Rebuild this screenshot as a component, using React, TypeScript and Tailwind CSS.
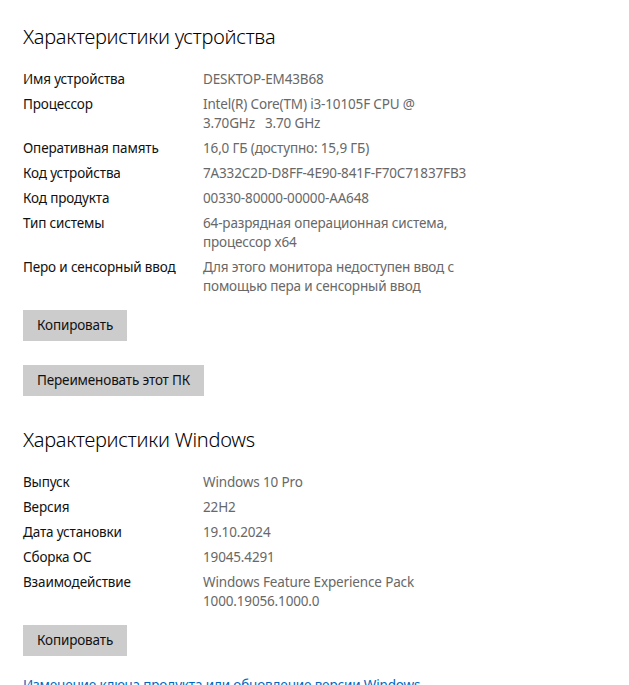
// Окно «О системе» — характеристики устройства и Windows.

const DEVICE: [string, string[]][] = [
  ['Имя устройства', ['DESKTOP-EM43B68']],
  ['Процессор', ['Intel(R) Core(TM) i3-10105F CPU @', '3.70GHz\u00a0\u00a0\u00a03.70 GHz']],
  ['Оперативная память', ['16,0 ГБ (доступно: 15,9 ГБ)']],
  ['Код устройства', ['7A332C2D-D8FF-4E90-841F-F70C71837FB3']],
  ['Код продукта', ['00330-80000-00000-AA648']],
  ['Тип системы', ['64-разрядная операционная система,', 'процессор x64']],
  ['Перо и сенсорный ввод', ['Для этого монитора недоступен ввод с', 'помощью пера и сенсорный ввод']],
]

const WINDOWS: [string, string[]][] = [
  ['Выпуск', ['Windows 10 Pro']],
  ['Версия', ['22H2']],
  ['Дата установки', ['19.10.2024']],
  ['Сборка ОС', ['19045.4291']],
  ['Взаимодействие', ['Windows Feature Experience Pack', '1000.19056.1000.0']],
]

function Rows({ rows }: { rows: [string, string[]][] }) {
  return (
    <div className="flex flex-col gap-[6px]">
      {rows.map(([label, value]) => (
        <div key={label} className="flex text-[13.5px] leading-[19px] tracking-[-0.15px]">
          <div className="w-[180px] shrink-0 text-[#111]">{label}</div>
          <div className="text-[#686868] whitespace-nowrap">
            {value.map((line, i) => <div key={i}>{line}</div>)}
          </div>
        </div>
      ))}
    </div>
  )
}

function Btn({ children }: { children: string }) {
  return (
    <button type="button" className="self-start h-[31px] px-[14px] bg-[#cccccc] text-[13.5px] tracking-[-0.15px] text-[#111]">
      {children}
    </button>
  )
}

export default function App() {
  return (
    <div
      className="w-[629px] h-[685px] overflow-hidden bg-white pl-[23px] pt-[23px] flex flex-col"
      style={{ fontFamily: '"Noto Sans", "Open Sans", sans-serif' }}
    >
      <h1 className="text-[20px] leading-[28px] tracking-[-0.25px] text-black font-light">Характеристики устройства</h1>
      <div className="mt-[19px]"><Rows rows={DEVICE} /></div>
      <div className="mt-[14px] flex flex-col gap-[24px]">
        <Btn>Копировать</Btn>
        <Btn>Переименовать этот ПК</Btn>
      </div>

      <h1 className="mt-[30px] text-[20px] leading-[28px] tracking-[-0.25px] text-black font-light">Характеристики Windows</h1>
      <div className="mt-[19px]"><Rows rows={WINDOWS} /></div>
      <div className="mt-[14px] flex flex-col">
        <Btn>Копировать</Btn>
      </div>

      <a className="mt-[20px] text-[13.5px] leading-[19px] tracking-[-0.15px] text-[#0067c0] whitespace-nowrap">
        Изменение ключа продукта или обновление версии Windows
      </a>
    </div>
  )
}
